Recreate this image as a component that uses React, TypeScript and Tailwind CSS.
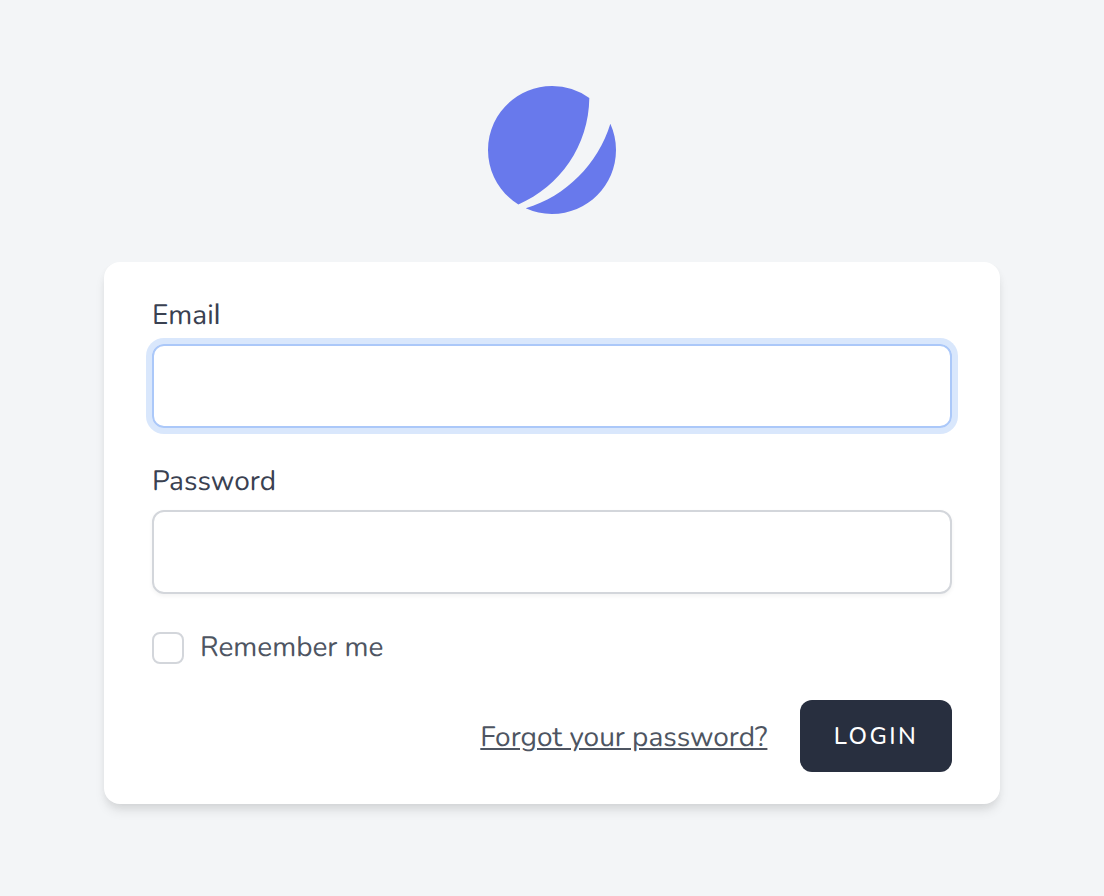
export default function App() {
  return (
    <div className="flex min-h-screen flex-col items-center bg-[#f3f5f7] pt-[86px] font-['Nunito','Lato','Open_Sans',sans-serif] antialiased [text-rendering:geometricPrecision]">
      <svg viewBox="0 0 48 48" className="h-32 w-32 shrink-0" fill="none">
        <path d="M11.395 44.428C4.557 40.198 0 32.632 0 24 0 10.745 10.745 0 24 0a23.891 23.891 0 0113.997 4.502c-.2 17.907-11.097 33.245-26.602 39.926z" fill="#6879ec" />
        <path d="M14.134 45.885A23.914 23.914 0 0024 48c13.255 0 24-10.745 24-24 0-3.516-.756-6.856-2.115-9.866-4.659 15.143-16.608 27.092-31.75 31.751z" fill="#6879ec" />
      </svg>
      <main className="mt-12 h-[542px] w-[896px] rounded-2xl bg-white px-12 pt-8 shadow-[0_8px_12px_-2px_rgba(0,0,0,0.1),0_4px_8px_-2px_rgba(0,0,0,0.06)]">
        <form>
          <label htmlFor="email" className="block h-[42px] text-[28px] leading-[42px] text-[#3a4151]">Emai<span className="font-['Lato',sans-serif] leading-none">l</span></label>
          <input id="email" type="email" className="mt-2 block h-[84px] w-full rounded-xl border-2 border-[#abc8f9] px-6 text-[32px] shadow-[0_0_0_6px_#d9e7fc] outline-none" />
          <label htmlFor="password" className="mt-8 flex h-[42px] items-center text-[28px] tracking-[0.05px] text-[#3a4151]">Password</label>
          <input id="password" type="password" className="mt-2 block h-[84px] w-full rounded-xl border-2 border-[#d3d6db] px-6 text-[32px] shadow-[0_2px_4px_rgba(0,0,0,0.05)] outline-none" />
          <label className="mt-8 flex h-[42px] items-center text-[28px] text-[#4e5562]">
            <input type="checkbox" className="mt-0.5 h-8 w-8 appearance-none rounded-lg border-2 border-[#d3d6db]" />
            <span className="ml-4">Remember me</span>
          </label>
          <div className="mt-8 flex items-center justify-end">
            <a href="#" className="pt-0.5 text-[28px] text-[#4e5562] underline">Forgot your password?</a>
            <button type="button" className="ml-[32.6px] flex h-[72px] w-[152px] items-center justify-center rounded-xl bg-[#282f3f] text-2xl font-medium tracking-[2.4px] text-white">LOGIN</button>
          </div>
        </form>
      </main>
    </div>
  );
}
